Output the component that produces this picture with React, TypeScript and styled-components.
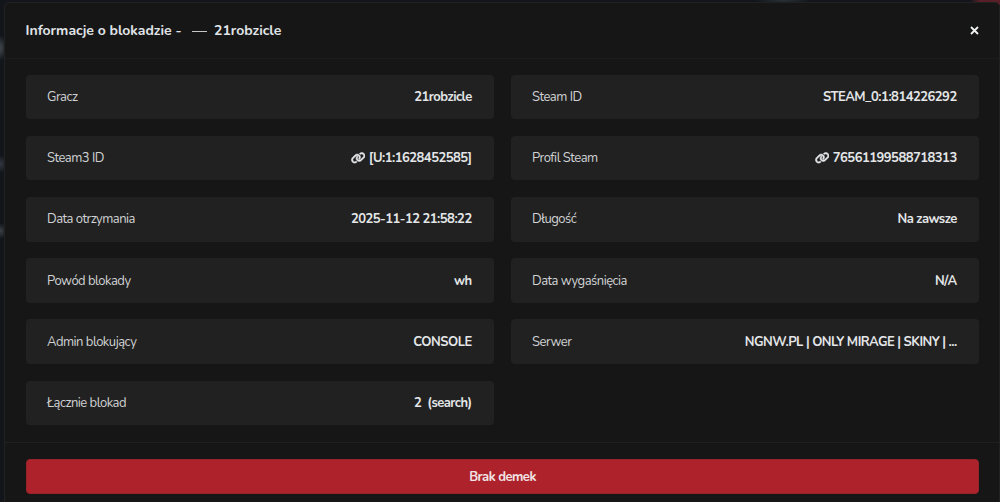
import React from "react";
import styled, { createGlobalStyle } from "styled-components";

const GlobalStyle = createGlobalStyle`
  * { box-sizing: border-box; }
  body {
    margin: 0;
    overflow: hidden;
    background: #12161b;
    font-family: Nunito, Lato, "Noto Sans", sans-serif;
    font-size: 13px;
    line-height: 18px;
    letter-spacing: -0.51px;
    color: #e4e6e8;
  }
`;

const Page = styled.div`
  height: 502px;
  padding: 2px 0 0 4px;
  overflow: hidden;
  background:
    radial-gradient(ellipse 7px 13px at 0 48px, #434850, transparent),
    radial-gradient(ellipse 8px 9px at 0 164px, #343741, transparent),
    radial-gradient(ellipse 8px 8px at 0 231px, #3a4047, transparent),
    radial-gradient(ellipse 28px 4px at 783px 0, #2b333a, transparent),
    linear-gradient(90deg, transparent 970px, #581f29 980px) 0 0 / 100% 5px no-repeat,
    #12161b;
`;

const Modal = styled.section`
  height: 520px;
  background: #161616;
  border: 1px solid #202222;
  border-radius: 5px;
`;

const Header = styled.header`
  display: flex;
  align-items: center;
  justify-content: space-between;
  height: 56px;
  padding: 0 20px 0 20.5px;
  border-bottom: 1px solid #1c1c1c;
`;

const Title = styled.h1`
  display: flex;
  align-items: center;
  margin: 0;
  font-size: 14px;
  line-height: 20px;
  font-weight: 700;
  letter-spacing: 0;
  color: #e0e4e8;
`;

const Text = styled.span`
  white-space: pre;
`;

const Dash = styled.span`
  width: 15px;
  height: 1px;
  margin: 2px 7px 0 10.5px;
  background: #c4c6c8;
`;

const CloseButton = styled.button`
  display: flex;
  padding: 0;
  border: 0;
  background: none;
  color: #f0f2f4;
`;

const Grid = styled.main`
  display: grid;
  grid-template-columns: 468px 468px;
  grid-auto-rows: 44.5px;
  gap: 16.7px 17px;
  height: 384px;
  padding: 15.7px 21px 0;
  border-bottom: 1px solid #202020;
`;

const Row = styled.div`
  display: flex;
  align-items: center;
  justify-content: space-between;
  padding: 0 22.3px 0 21px;
  border-radius: 4px;
  background: #212121;
`;

const Label = styled.span`
  color: #d0d2d4;
`;

const Value = styled.span`
  display: flex;
  align-items: center;
  gap: 3.5px;
  font-weight: 700;
`;

const Footer = styled.footer`
  padding: 16px 20px 16px 21px;
`;

const DemoButton = styled.button`
  display: block;
  width: 953px;
  height: 35px;
  padding: 0;
  border: 1px solid #98242b;
  border-radius: 4px;
  background: #ae232b;
  color: #f1e4e5;
  font: inherit;
  font-weight: 700;
  letter-spacing: inherit;
`;

const LinkIcon = () => (
  <svg width="14.500" height="11.600" viewBox="0 0 640 512" fill="currentColor" aria-hidden="true">
    <path d="M579.8 267.7c56.5-56.5 56.5-148 0-204.5c-50-50-128.8-56.5-186.300-15.400l-1.600 1.100c-14.400 10.300-17.700 30.300-7.400 44.600s30.300 17.700 44.600 7.400l1.600-1.100c32.100-22.900 76-19.300 103.800 8.600c31.500 31.500 31.500 82.500 0 114L422.300 334.800c-31.500 31.500-82.500 31.500-114 0c-27.900-27.900-31.500-71.800-8.600-103.800l1.100-1.600c10.300-14.400 6.900-34.400-7.400-44.600s-34.400-6.900-44.600 7.400l-1.100 1.600C206.500 251.200 213 330 263 380c56.500 56.500 148 56.500 204.500 0L579.800 267.700zM60.200 244.300c-56.500 56.500-56.500 148 0 204.500c50 50 128.800 56.500 186.300 15.400l1.600-1.100c14.400-10.300 17.700-30.300 7.400-44.600s-30.300-17.700-44.600-7.400l-1.600 1.100c-32.100 22.900-76 19.300-103.800-8.600C74 372 74 321 105.500 289.500L217.700 177.200c31.500-31.500 82.500-31.500 114 0c27.900 27.900 31.500 71.800 8.600 103.900l-1.100 1.600c-10.300 14.400-6.900 34.400 7.400 44.600s34.400 6.900 44.600-7.400l1.100-1.600C433.500 260.800 427 182 377 132c-56.500-56.500-148-56.500-204.500 0L60.200 244.300z" stroke="currentColor" strokeWidth="22" />
  </svg>
);

type Item = { label: string; value: string; link?: boolean };

const items: Item[] = [
  { label: "Gracz", value: "21robzicle" },
  { label: "Steam ID", value: "STEAM_0:1:814226292" },
  { label: "Steam3 ID", value: "[U:1:1628452585]", link: true },
  { label: "Profil Steam", value: "76561199588718313", link: true },
  { label: "Data otrzymania", value: "2025-11-12 21:58:22" },
  { label: "Długość", value: "Na zawsze" },
  { label: "Powód blokady", value: "wh" },
  { label: "Data wygaśnięcia", value: "N/A" },
  { label: "Admin blokujący", value: "CONSOLE" },
  { label: "Serwer", value: "NGNW.PL | ONLY MIRAGE | SKINY | ..." },
  { label: "Łącznie blokad", value: "2  (search)" },
];

export default function App() {
  return (
    <>
      <GlobalStyle />
      <Page>
        <Modal>
          <Header>
            <Title>
              <Text>Informacje o blokadzie -</Text>
              <Dash />
              <Text>21robzicle</Text>
            </Title>
            <CloseButton aria-label="Zamknij">
              <svg width="9" height="9" viewBox="0 0 9 9" stroke="currentColor" strokeWidth="1.800">
                <path d="M1 1l7 7M8 1L1 8" />
              </svg>
            </CloseButton>
          </Header>
          <Grid>
            {items.map((item) => (
              <Row key={item.label}>
                <Label>{item.label}</Label>
                <Value>
                  {item.link && <LinkIcon />}
                  <Text>{item.value}</Text>
                </Value>
              </Row>
            ))}
          </Grid>
          <Footer>
            <DemoButton>Brak demek</DemoButton>
          </Footer>
        </Modal>
      </Page>
    </>
  );
}
